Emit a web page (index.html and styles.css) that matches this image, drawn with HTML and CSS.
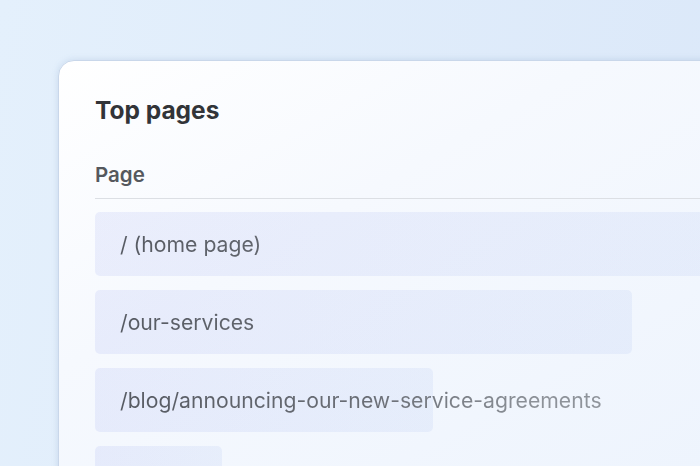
FILE: index.html
```html
<!DOCTYPE html>
<html>
<head>
<meta charset="utf-8">
<link rel="stylesheet" href="styles.css">
</head>
<body>
<div class="stage">
  <section class="card">
    <h2 class="title">Top pages</h2>
    <div class="header">Page</div>
    <ul class="rows">
      <li class="row"><div class="bar" style="width: 100%"></div><span class="label">/ (home page)</span></li>
      <li class="row"><div class="bar" style="width: 537px"></div><span class="label">/our-services</span></li>
      <li class="row"><div class="bar" style="width: 338px"></div><span class="label">/blog/announcing-our-new-service-agreements</span></li>
      <li class="row"><div class="bar" style="width: 127px"></div><span class="label"></span></li>
    </ul>
  </section>
</div>
</body>
</html>
```
FILE: styles.css
```css
html, body {
  margin: 0;
  padding: 0;
  width: 700px;
  height: 466px;
  overflow: hidden;
}
body {
  background: linear-gradient(100deg, #e4f0fc 0%, #dbe8f9 100%);
  font-family: Inter, "Noto Sans", sans-serif;
}
.stage {
  padding: 60px 0 0 58px;
}
.card {
  width: 700px;
  height: 480px;
  box-sizing: border-box;
  border: 1px solid #c9d7ea;
  border-radius: 16px;
  background: linear-gradient(150deg, #ffffff 0%, #f6f9fe 35%, #ecf3fd 100%);
  box-shadow: 0 0 6px rgba(120, 150, 190, 0.25);
  padding: 33px 0 0 36px;
}
.title {
  margin: 0;
  font-size: 24.5px;
  line-height: 32px;
  font-weight: 700;
  color: #323438;
}
.header {
  margin-top: 35px;
  font-size: 20.5px;
  line-height: 28px;
  font-weight: 600;
  color: #55585d;
  padding-bottom: 9px;
  border-bottom: 1.5px solid #dcdfe4;
}
.rows {
  list-style: none;
  margin: 13px 0 0;
  padding: 0;
  display: flex;
  flex-direction: column;
  gap: 14px;
}
.row {
  position: relative;
  height: 64px;
  display: flex;
  align-items: center;
}
.bar {
  position: absolute;
  left: 0;
  top: 0;
  bottom: 0;
  border-radius: 5px;
  background: linear-gradient(90deg, rgba(80, 100, 225, 0.09), rgba(80, 120, 220, 0.075));
}
.label {
  position: relative;
  margin-left: 25px;
  font-size: 21.2px;
  line-height: 30px;
  white-space: nowrap;
  background: linear-gradient(90deg, #565a62 0px, #6a6e76 250px, #8d9299 420px, #8f949b 500px);
  background-size: 500px 100%;
  background-repeat: no-repeat;
  -webkit-background-clip: text;
  background-clip: text;
  color: transparent;
}
```
